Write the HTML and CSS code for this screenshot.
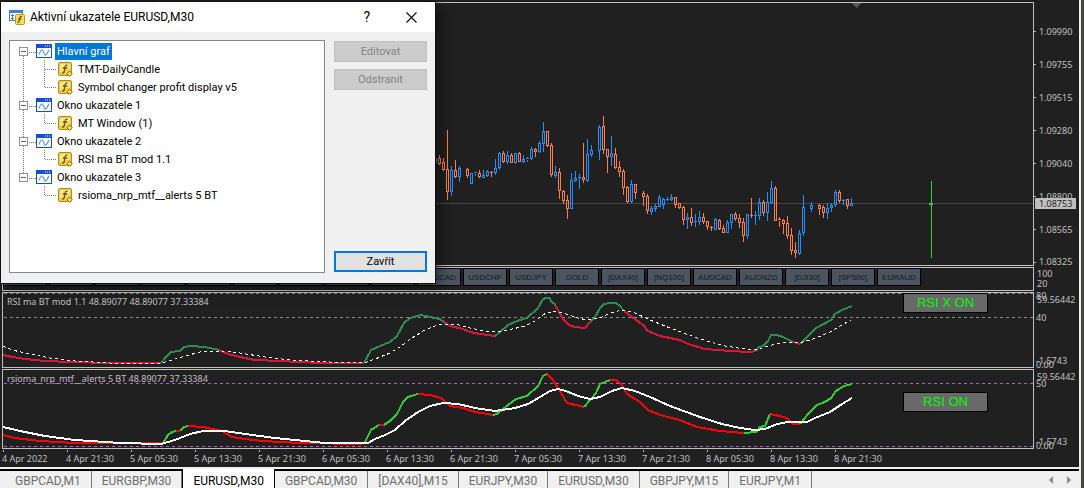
FILE: index.html
```html
<!DOCTYPE html>
<html lang="cs">
<head>
  <meta charset="UTF-8" />
  <meta name="viewport" content="width=device-width, initial-scale=1.0" />
  <title>EURUSD,M30</title>
  <link rel="stylesheet" href="styles.css">
</head>
<body>
  <!-- Shared icons -->
  <svg class="icon-defs" aria-hidden="true">
    <symbol id="icon-window" viewBox="0 0 16 15">
      <rect x="0.5" y="0.5" width="15" height="13" fill="#fff" stroke="#1450c8"/>
      <rect x="0" y="0" width="16" height="4" fill="#1450d2"/>
      <path d="M9 2h1M11 2h1M13 2h1" stroke="#fff"/>
      <path d="M3 10.500C4 8 5 5.500 6.300 6C8 6.500 7.500 11 9.300 11C11 11 11.500 8 13 6" fill="none" stroke="#6e96e6" stroke-width="1.300"/>
    </symbol>
    <symbol id="icon-func" viewBox="0 0 16 15">
      <rect x="0.5" y="0.5" width="13" height="13" rx="1.500" fill="#f0cd46" stroke="#b48c1e"/>
      <path d="M2 2h10v5l-10 3z" fill="#fae68c"/>
      <path d="M9.500 3.500C8 2.500 7.300 3.500 7 5.500L6.200 9.500C6 11 5 11.500 4 10.800M4.800 6h4.500" fill="none" stroke="#6e500a" stroke-width="1.300"/>
      <path d="M11.500 9l2.700 2.700-2.700 2.700-2.700-2.700z" fill="#fadc5a" stroke="#8c6914"/>
    </symbol>
    <symbol id="branch-mid" viewBox="0 0 12 18">
      <path d="M0.5 0v18M1 9.500h11" stroke="#808080" stroke-dasharray="1 1"/>
    </symbol>
    <symbol id="branch-end" viewBox="0 0 12 18">
      <path d="M0.5 0v10M1 9.500h11" stroke="#808080" stroke-dasharray="1 1"/>
    </symbol>
  </svg>

  <div class="terminal">
    <main class="chart">
      <!-- Price chart -->
      <section class="panel price-panel">
        <svg class="plot">
          <g transform="translate(-3 -3)" shape-rendering="crispEdges">
            <path d="M851 3h11l-5.500 5z" fill="#555"/>
            <path d="M3 203.500h1031" stroke="#434848"/>
            <g id="candles" fill="none"></g>
            <path d="M931.500 181v77" stroke="#32cd32"/>
            <path d="M929 204h4" stroke="#32cd32" stroke-width="2"/>
          </g>
        </svg>
      </section>
      <div class="scale price-scale">
        <ul>
          <li>1.09990</li>
          <li>1.09755</li>
          <li>1.09515</li>
          <li>1.09280</li>
          <li>1.09040</li>
          <li>1.08800</li>
          <li>1.08565</li>
          <li>1.08325</li>
        </ul>
        <span class="bid">1.08753</span>
      </div>

      <!-- Symbol buttons -->
      <section class="panel symbols">
        <button>EURUSD</button>
        <button>GBPUSD</button>
        <button>EURGBP</button>
        <button>EURJPY</button>
        <button>GBPJPY</button>
        <button>GBPCAD</button>
        <button>AUDUSD</button>
        <button>NZDUSD</button>
        <button>EURCAD</button>
        <button>USDCAD</button>
        <button>USDCHF</button>
        <button>USDJPY</button>
        <button>GOLD</button>
        <button>[DAX40]</button>
        <button>[NQ100]</button>
        <button>AUDCAD</button>
        <button>AUDNZD</button>
        <button>[DJI30]</button>
        <button>[SP500]</button>
        <button>EURAUD</button>
      </section>
      <div class="scale symbols-scale">
        <span>100</span>
        <span>20</span>
      </div>

      <!-- RSI ma BT -->
      <section class="panel">
        <svg class="plot">
          <g transform="translate(-3 -293)" fill="none" shape-rendering="crispEdges">
            <path d="M4 293.500h1030M4 317.500h1030" stroke="#8c8c8c" stroke-dasharray="3 3"/>
            <g stroke="#dc143c" stroke-width="2">
              <polyline points="3,355 13,357 25,359 45,361 70,362 110,363 161,363"/>
              <polyline points="219,350 228,354 240,357 255,360 280,361 320,363 364,363"/>
              <polyline points="444,322 450,326 463,329 470,332 480,334 495,336"/>
              <polyline points="555,305 558,310 563,319 569,325 575,327 585,328 590,322"/>
              <polyline points="624,311 632,317 643,325 648,331 660,336 680,340 688,344 705,349 730,351 750,352 756,351"/>
              <polyline points="793,342 800,344"/>
            </g>
            <g stroke="#2e8b57" stroke-width="2">
              <polyline points="161,363 165,358 171,352 180,351 184,347 190,346 205,347 219,350"/>
              <polyline points="364,363 371,350 380,346 390,342 397,336 404,323 410,318 421,315 430,317 440,319 444,322"/>
              <polyline points="495,336 500,332 508,325 517,321 527,318 538,308 543,299 546,298 549,298 552,302 556,305"/>
              <polyline points="590,322 595,317 600,308 604,304 610,303 616,303 620,306 624,311"/>
              <polyline points="756,351 759,347 763,346 768,341 771,335 777,335 783,337 793,342"/>
              <polyline points="800,344 808,336 816,328 831,320 835,314 842,310 852,306"/>
            </g>
            <polyline stroke="#ffffe0" stroke-dasharray="3 3" points="3,346 12,350 30,354 50,358 75,361 110,363 161,363 172,360 185,356 200,352 222,351 240,353 265,357 290,360 330,362 364,363 375,359 390,353 400,347 412,338 425,330 440,324 455,324 470,328 485,331 496,332 508,330 525,326 535,321 546,313 556,311 566,314 578,318 587,320 600,318 610,313 622,310 635,313 650,320 670,328 700,339 725,346 745,349 756,350 768,346 780,343 792,342 803,342 816,338 830,332 842,325 851,320"/>
          </g>
        </svg>
        <h2>RSI ma BT mod 1.1 48.89077 48.89077 37.33384</h2>
        <button class="toggle rsi-x">RSI X ON</button>
      </section>
      <div class="scale rsi-scale">
        <span class="limit-top">80</span>
        <span class="max">59.56442</span>
        <span class="level">40</span>
        <span class="min">-1.5743</span>
        <span class="limit-bottom">0.00</span>
      </div>

      <!-- rsioma -->
      <section class="panel">
        <svg class="plot">
          <g transform="translate(-3 -370)" fill="none" shape-rendering="crispEdges">
            <path d="M4 383.500h1030M4 446.500h1030" stroke="#ba55d3" stroke-dasharray="3 3"/>
            <g stroke="#ff0000" stroke-width="2">
              <polyline points="3,435 15,438 40,441 75,443 110,443 163,443"/>
              <polyline points="176,431 180,431"/>
              <polyline points="188,426 203,427 222,431 232,437 245,439 262,441 300,443 364,444"/>
              <polyline points="379,425 384,425"/>
              <polyline points="418,394 430,395 441,398 450,406 463,408 475,412 493,415"/>
              <polyline points="547,374 553,380 558,388 567,403 584,407"/>
              <polyline points="610,380 616,380 622,385 627,394 640,402 648,410 660,415 680,420 697,427 720,431 744,433"/>
              <polyline points="770,414 780,416 787,418 793,424 800,424"/>
            </g>
            <g stroke="#32cd32" stroke-width="2">
              <polyline points="163,443 168,435 172,432 176,431"/>
              <polyline points="180,431 184,427 188,426"/>
              <polyline points="364,444 371,430 379,425"/>
              <polyline points="384,425 390,421 397,414 403,402 408,397 418,394"/>
              <polyline points="493,415 497,414 508,405 516,399 527,396 538,386 543,376 547,374"/>
              <polyline points="584,407 590,400 596,393 600,384 610,380"/>
              <polyline points="744,433 756,432 760,427 765,426 770,414"/>
              <polyline points="800,424 808,414 817,405 825,402 831,398 836,391 844,386 852,384"/>
            </g>
            <polyline stroke="#fff" stroke-width="2" points="3,427 20,431 45,436 75,440 120,443 161,444 175,440 190,434 203,431 225,431 245,434 275,438 325,443 368,443 375,439 385,435 395,430 405,421 418,412 430,406 443,403 458,404 475,408 495,411 515,408 528,404 540,397 550,391 558,389 566,391 578,396 590,399 600,397 612,391 622,388 635,391 650,397 670,406 700,417 722,424 740,428 755,430 765,429 777,424 788,422 807,422 815,418 830,412 842,404 852,398"/>
          </g>
        </svg>
        <h2>rsioma_nrp_mtf__alerts 5 BT 48.89077 37.33384</h2>
        <button class="toggle rsi">RSI ON</button>
      </section>
      <div class="scale rsioma-scale">
        <span class="max">59.56442</span>
        <span class="level">50</span>
        <span class="min">-1.5743</span>
        <span class="limit-bottom">0.00</span>
      </div>

      <ol class="time-axis">
        <li>4 Apr 2022</li>
        <li>4 Apr 21:30</li>
        <li>5 Apr 05:30</li>
        <li>5 Apr 13:30</li>
        <li>5 Apr 21:30</li>
        <li>6 Apr 05:30</li>
        <li>6 Apr 13:30</li>
        <li>6 Apr 21:30</li>
        <li>7 Apr 05:30</li>
        <li>7 Apr 13:30</li>
        <li>7 Apr 21:30</li>
        <li>8 Apr 05:30</li>
        <li>8 Apr 13:30</li>
        <li>8 Apr 21:30</li>
      </ol>
    </main>

    <nav class="tabs">
      <button>GBPCAD,M1</button>
      <button>EURGBP,M30</button>
      <button class="active">EURUSD,M30</button>
      <button>GBPCAD,M30</button>
      <button>[DAX40],M15</button>
      <button>EURJPY,M30</button>
      <button>EURUSD,M30</button>
      <button>GBPJPY,M15</button>
      <button>EURJPY,M1</button>
      <div class="tab-scroll">
        <button aria-label="Předchozí"><svg width="4" height="8"><path d="M4 0v8L0 4z" fill="#8c8c8c"/></svg></button>
        <button aria-label="Další"><svg width="4" height="8"><path d="M0 0v8l4-4z" fill="#8c8c8c"/></svg></button>
      </div>
    </nav>
  </div>

  <!-- Indicator list dialog -->
  <div class="dialog" role="dialog" aria-labelledby="dialogTitle">
    <header class="dialog-title">
      <svg class="app-icon" width="16" height="15" viewBox="0 0 16 15">
        <rect x="0.5" y="0.5" width="13" height="10" fill="#fff" stroke="#3c82c8"/>
        <path d="M0 1.500h14" stroke="#3c82c8" stroke-width="3"/>
        <path d="M3.500 4v6M2 5.500h3M2 8.500h3" stroke="#4682b4"/>
        <rect x="6.500" y="4.500" width="9" height="10" rx="1" fill="#fadc50" stroke="#be9628"/>
        <path d="M13 6.500c-1.500-.5-2 .5-2.200 2L10.200 11c-.2 1-.8 1.500-1.700 1M9 9h3.500" fill="none" stroke="#64460a" stroke-width="1.200"/>
      </svg>
      <h1 id="dialogTitle">Aktivní ukazatele EURUSD,M30</h1>
      <button class="help" aria-label="Nápověda">?</button>
      <button class="close" aria-label="Zavřít okno"><svg width="11" height="11"><path d="M.5.5l10 10M10.500.5l-10 10" stroke="#111" stroke-width="1.200"/></svg></button>
    </header>
    <div class="dialog-body">
      <div class="tree-box">
        <ul class="tree">
          <li>
            <div class="row"><button class="expander" aria-label="Sbalit"></button><svg class="icon"><use href="#icon-window"/></svg><span class="selected">Hlavní graf</span></div>
            <ul>
              <li class="row"><svg class="branch"><use href="#branch-mid"/></svg><svg class="icon"><use href="#icon-func"/></svg><span>TMT-DailyCandle</span></li>
              <li class="row"><svg class="branch"><use href="#branch-end"/></svg><svg class="icon"><use href="#icon-func"/></svg><span>Symbol changer profit display v5</span></li>
            </ul>
          </li>
          <li>
            <div class="row"><button class="expander" aria-label="Sbalit"></button><svg class="icon"><use href="#icon-window"/></svg><span>Okno ukazatele 1</span></div>
            <ul>
              <li class="row"><svg class="branch"><use href="#branch-end"/></svg><svg class="icon"><use href="#icon-func"/></svg><span>MT Window (1)</span></li>
            </ul>
          </li>
          <li>
            <div class="row"><button class="expander" aria-label="Sbalit"></button><svg class="icon"><use href="#icon-window"/></svg><span>Okno ukazatele 2</span></div>
            <ul>
              <li class="row"><svg class="branch"><use href="#branch-end"/></svg><svg class="icon"><use href="#icon-func"/></svg><span>RSI ma BT mod 1.1</span></li>
            </ul>
          </li>
          <li>
            <div class="row"><button class="expander" aria-label="Sbalit"></button><svg class="icon"><use href="#icon-window"/></svg><span>Okno ukazatele 3</span></div>
            <ul>
              <li class="row"><svg class="branch"><use href="#branch-end"/></svg><svg class="icon"><use href="#icon-func"/></svg><span>rsioma_nrp_mtf__alerts 5 BT</span></li>
            </ul>
          </li>
        </ul>
      </div>
      <div class="actions">
        <button disabled>Editovat</button>
        <button disabled>Odstranit</button>
        <button class="primary">Zavřít</button>
      </div>
    </div>
  </div>

  <script>
    // x, high, body top, body bottom, low, direction (1 = up, 0 = down)
    const candles = [
      [435,151,158,162,163,1], [439,155,158,164,165,0], [443,158,162,170,171,0], [447,130,169,192,200,0],
      [451,166,170,192,196,1], [455,160,170,177,178,0], [459,166,168,177,182,1], [467,168,169,176,178,0],
      [471,173,173,184,184,1], [475,172,172,174,176,1], [479,170,173,177,178,0], [483,170,175,178,178,1],
      [487,170,171,176,177,1], [491,171,172,173,177,0], [495,159,168,173,175,1], [499,152,153,168,170,1],
      [503,151,153,162,163,0], [507,151,155,162,164,1], [511,153,155,163,163,0], [515,153,153,163,164,1],
      [519,152,153,162,162,0], [523,155,159,162,163,1], [527,157,158,160,162,1], [531,147,149,159,160,1],
      [535,148,149,152,157,0], [539,141,143,152,153,1], [543,122,131,144,152,1], [547,131,131,146,147,0],
      [551,143,145,175,177,0], [555,166,172,176,178,1], [559,168,172,191,199,0], [563,190,191,201,204,0],
      [567,195,200,209,219,0], [571,173,180,209,209,1], [575,171,178,181,182,1], [579,174,177,178,189,1],
      [583,143,177,180,183,0], [587,139,154,181,182,1], [591,145,150,155,157,1], [599,125,127,151,160,1],
      [603,116,126,150,154,0], [607,149,149,157,173,0], [611,136,153,157,166,1], [615,148,154,168,169,0],
      [619,161,167,172,177,0], [623,169,171,188,195,0], [627,186,187,202,203,0], [631,180,184,202,203,1],
      [635,184,184,193,199,0], [643,191,193,197,206,0], [647,194,196,211,214,0], [651,206,208,212,215,1],
      [655,204,206,209,212,1], [659,195,197,207,207,1], [663,198,199,205,209,1], [667,197,199,200,201,1],
      [671,194,197,200,201,1], [675,197,197,205,208,0], [679,203,203,208,209,0], [683,206,207,220,225,0],
      [687,213,217,220,229,1], [691,208,217,223,226,0], [695,214,221,222,227,1], [699,211,217,222,225,1],
      [703,213,217,222,224,0], [707,221,221,227,230,0], [711,226,227,228,231,0], [715,218,219,230,230,1],
      [719,219,220,229,230,0], [723,225,228,233,233,0], [727,220,222,233,233,1], [731,214,214,223,229,1],
      [735,212,214,219,221,0], [739,214,218,223,228,0], [743,218,222,236,242,0], [747,214,214,236,239,1],
      [751,198,215,216,218,0], [755,211,215,216,225,1], [759,198,202,216,220,1], [763,200,202,213,216,0],
      [767,192,202,213,221,1], [771,181,188,203,204,1], [775,186,188,221,221,0], [779,217,219,221,227,0],
      [783,219,220,224,234,0], [787,216,223,236,239,0], [791,228,235,251,255,0], [795,242,250,253,258,0],
      [799,230,233,254,255,1], [803,195,207,233,236,1], [811,202,205,209,212,1], [819,204,205,209,215,0],
      [823,205,207,213,218,0], [827,203,208,213,219,1], [831,203,205,208,212,1], [835,190,192,205,207,1],
      [839,190,192,201,203,0], [843,199,200,201,205,1], [847,199,199,206,209,0], [851,198,203,206,206,1]
    ];

    function candlePath([x, high, top, bottom, low]) {
      const wicks = `M${x + 0.5} ${high}V${top}M${x + 0.5} ${bottom}V${low}`;
      if (bottom - top < 3) {
        return `${wicks}M${x - 1} ${top + 0.5}h3`;
      }
      return `${wicks}M${x - 0.5} ${top + 0.5}h2V${bottom - 0.5}h-2z`;
    }

    function drawCandles(direction, color) {
      const path = document.createElementNS('http://www.w3.org/2000/svg', 'path');
      path.setAttribute('d', candles.filter(c => c[5] === direction).map(candlePath).join(''));
      path.setAttribute('stroke', color);
      document.getElementById('candles').appendChild(path);
    }

    drawCandles(1, '#1e90ff');
    drawCandles(0, '#ff7f50');
  </script>
</body>
</html>
```

FILE: styles.css
```css
:root {
  --chart-bg: #202020;
  --frame: #c0c0c0;
  --dialog-bg: #f0f0f0;
  --accent: #0078d7;
}

* {
  box-sizing: border-box;
}

body {
  margin: 0;
  font-family: "Noto Sans", sans-serif;
  font-size: 9px;
  background-color: #44443f;
}

ul, ol {
  list-style: none;
  margin: 0;
  padding: 0;
}

h1, h2 {
  margin: 0;
  font-weight: normal;
}

button {
  font: inherit;
  padding: 0;
}

.icon-defs {
  position: absolute;
  width: 0;
  height: 0;
}

.terminal {
  display: flex;
  flex-direction: column;
  min-height: 100vh;
  margin-right: 3px;
  border-right: 2px solid #f0f0f0;
  background: var(--chart-bg);
}

/* Chart */
.chart {
  display: grid;
  grid-template-columns: minmax(0, 1fr) 45px;
  grid-template-rows: 264px 24px 76px 80px 20px;
  row-gap: 1px;
  padding: 2px 0 0 2px;
  margin-bottom: -2px;
  color: var(--frame);
}

.panel {
  position: relative;
  border: 1px solid var(--frame);
  overflow: hidden;
}

.panel h2 {
  position: absolute;
  top: 3px;
  left: 4px;
  font-size: 9px;
  line-height: 12px;
}

.plot {
  display: block;
  width: 100%;
  height: 100%;
}

.scale {
  position: relative;
  line-height: 10px;
}

.price-scale ul {
  padding-top: 13px;
}

.price-scale li {
  display: flex;
  align-items: center;
  gap: 3px;
  height: 33px;
}

.price-scale li::before {
  content: "";
  width: 2px;
  height: 1px;
  background: var(--frame);
}

.price-scale li:last-child {
  height: 32px;
}

.bid {
  position: absolute;
  top: 196px;
  left: 1px;
  width: 41px;
  padding-left: 4px;
  line-height: 11px;
  background: var(--frame);
  color: #202020;
}

.symbols {
  display: flex;
  gap: 2px;
  padding-bottom: 4px;
}

.symbols button {
  flex: 0 0 44px;
  border: 1px solid #000;
  background: #4a5560;
  color: #1a1a1a;
  font-family: "Liberation Sans", Arial, sans-serif;
  font-size: 8px;
}

.symbols-scale {
  display: flex;
  flex-direction: column;
  padding: 2px 0 0 3px;
}

.rsi-scale span,
.rsioma-scale span {
  position: absolute;
  left: 2px;
}

.rsi-scale .max,
.rsioma-scale .max {
  top: 3px;
  left: 3px;
}

.rsi-scale .limit-top {
  top: -1px;
}

.rsi-scale .level {
  top: 21px;
}

.rsioma-scale .level {
  top: 10px;
}

.rsi-scale .min,
.rsioma-scale .min {
  bottom: 2px;
}

.rsi-scale .limit-bottom,
.rsioma-scale .limit-bottom {
  bottom: -2px;
}

.toggle {
  position: absolute;
  right: 45px;
  width: 85px;
  height: 20px;
  border: 1px solid #000;
  background: #696969;
  color: #00ff00;
  font-family: "Liberation Sans", Arial, sans-serif;
  font-size: 13px;
  line-height: 18px;
}

.rsi-x {
  top: 0;
}

.rsi {
  top: 22px;
}

.time-axis {
  grid-column: 1 / -1;
  display: flex;
}

.time-axis li {
  flex: 0 0 64px;
  line-height: 14px;
  white-space: nowrap;
}

.time-axis li::before {
  content: "";
  display: block;
  width: 1px;
  height: 2px;
  margin-left: 1px;
  background: var(--frame);
}

/* Chart tabs */
.tabs {
  display: flex;
  flex: 1;
  position: relative;
  margin-top: 1px;
  border-top: 2px solid #000;
  box-shadow: 0 -2px 0 #f0f0f0;
  padding-left: 5px;
  background: var(--dialog-bg);
  font-family: Roboto, "Segoe UI", sans-serif;
  font-size: 12px;
}

.tabs > button {
  padding: 2px 10px 0;
  border: 0;
  border-right: 1px solid #777;
  background: none;
  color: #6e6e6e;
  line-height: 14px;
}

.tabs > .active {
  margin-top: -2px;
  padding-top: 4px;
  border: 1px solid #000;
  border-width: 0 1px;
  background: #fff;
  color: #000;
}

.tab-scroll {
  display: flex;
  gap: 14px;
  margin-left: auto;
  padding-right: 8px;
}

.tab-scroll button {
  border: 0;
  background: none;
}

/* Dialog */
.dialog {
  position: absolute;
  top: 2px;
  left: 1px;
  width: 434px;
  background: var(--dialog-bg);
  box-shadow: 0 0 0 1px #111, 3px 3px 14px rgba(0, 0, 0, 0.6);
  color: #000;
  font-family: Roboto, Tahoma, sans-serif;
  font-size: 11px;
}

.dialog-title {
  display: flex;
  align-items: center;
  height: 30px;
  padding: 0 18px 0 8px;
  background: #fff;
}

.dialog-title h1 {
  flex: 1;
  margin-left: 5px;
  font-size: 12px;
}

.dialog-title button {
  border: 0;
  background: none;
}

.help {
  margin-right: 36px;
  font-size: 14px;
}

.close {
  display: flex;
}

.dialog-body {
  display: flex;
  gap: 9px;
  padding: 8px 8px 10px;
}

.tree-box {
  flex: 1;
  min-height: 233px;
  padding: 1px 0 0 9px;
  border: 1px solid #828790;
  background: #fff;
}

.tree {
  background: repeating-linear-gradient(#808080 0 1px, #fff 1px 2px) 4px 12px / 1px 124px no-repeat;
}

.row {
  display: flex;
  align-items: center;
  height: 18px;
  white-space: nowrap;
}

.row span {
  padding: 0 2px;
  margin-left: 3px;
  line-height: 17px;
}

.row .selected {
  background: var(--accent);
  color: #fff;
}

.icon {
  flex: none;
  width: 16px;
  height: 15px;
}

.expander {
  width: 9px;
  height: 9px;
  border: 1px solid #919191;
  background: linear-gradient(#4b63a7, #4b63a7) center / 5px 1px no-repeat #fff;
}

/* dotted connector between the expander and the window icon */
.expander + .icon {
  width: 24px;
  padding-left: 8px;
  background: repeating-linear-gradient(90deg, #fff 0 1px, #808080 1px 2px) 0 8px / 8px 1px no-repeat;
}

.tree ul {
  padding-left: 25px;
}

.branch {
  width: 12px;
  height: 18px;
}

.branch + .icon {
  margin-left: 2px;
}

.branch ~ span {
  margin-left: 2px;
}

.actions {
  display: flex;
  flex-direction: column;
  gap: 7px;
  width: 93px;
  padding: 1px 0;
}

.actions button {
  height: 21px;
  border: 1px solid #adadad;
  background: #e1e1e1;
  color: #000;
}

.actions button:disabled {
  border-color: #bfbfbf;
  background: #ccc;
  color: #838383;
}

.actions .primary {
  margin-top: auto;
  border: 2px solid var(--accent);
}
```
